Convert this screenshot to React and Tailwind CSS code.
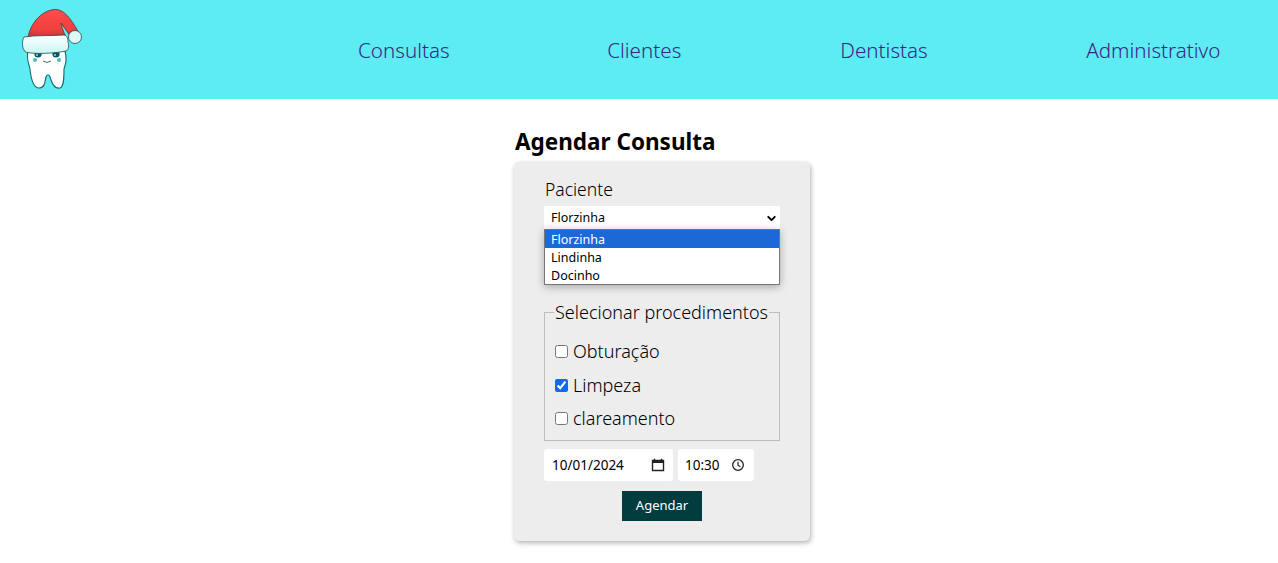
import React from 'react';
import { ChevronDown } from 'lucide-react';

const navLinks = [
  { label: 'Consultas', cls: 'ml-[275px]' },
  { label: 'Clientes', cls: 'ml-[157.5px]' },
  { label: 'Dentistas', cls: 'ml-[159px]' },
  { label: 'Administrativo', cls: 'ml-[158.5px]' },
];

const pacientes = ['Florzinha', 'Lindinha', 'Docinho'];

const procedimentos = [
  { label: 'Obturação', checked: false },
  { label: 'Limpeza', checked: true },
  { label: 'clareamento', checked: false },
];

// Tooth with a santa hat, drawn by hand
const Logo = () => (
  <svg width="62" height="82" viewBox="0 0 62 82" className="mt-[1px] shrink-0">
    <defs>
      <linearGradient id="hat" x1="0" y1="0" x2="0" y2="1">
        <stop offset="0" stopColor="#ff4d4d" />
        <stop offset="0.7" stopColor="#f03f3f" />
        <stop offset="1" stopColor="#a83a3a" />
      </linearGradient>
      <linearGradient id="fur" x1="0" y1="0" x2="0" y2="1">
        <stop offset="0" stopColor="#ffffff" />
        <stop offset="1" stopColor="#c8f7f5" />
      </linearGradient>
    </defs>
    <path
      d="M7 42 C5 50 8 55 9 60 C10 70 12 79 18 79 C24 79 24 72 25 68 C26 65 28 65 29 68 C31 74 33 80 39 79 C43 78 43 68 43 60 C45 54 46 50 44 42 Z"
      fill="#fff"
      stroke="#17676c"
      strokeWidth="1.1"
    />
    <circle cx="17" cy="45" r="3.6" fill="#0b5560" />
    <circle cx="35" cy="45" r="3.6" fill="#0b5560" />
    <circle cx="16" cy="46" r="1" fill="#7fe6e6" />
    <circle cx="34" cy="46" r="1" fill="#7fe6e6" />
    <circle cx="14" cy="51" r="2" fill="#35c4cc" />
    <circle cx="38" cy="51" r="2" fill="#35c4cc" />
    <path d="M22 52 Q26 55 30 52" fill="none" stroke="#17474a" strokeWidth="0.8" />
    <path
      d="M7 29 C9 15 20 2 33 0.5 C43 -0.5 50 10 58 24 L50 28 L47 24 L40 14 C41 20 44 26 46 30 Z"
      fill="url(#hat)"
      stroke="#5a3030"
      strokeWidth="0.8"
    />
    <path
      d="M3 28 C1 31 1 38 3 41 C4 44 6 43 10 44 C20 45 36 44 45 42 C48 41 48 36 47 33 C47 30 46 26 43 26 C30 27 15 26 3 28 Z"
      fill="url(#fur)"
      stroke="#234b4d"
      strokeWidth="0.8"
    />
    <circle cx="54" cy="28" r="6.5" fill="#dcfbf9" stroke="#234b4d" strokeWidth="0.8" />
  </svg>
);

const CalendarIcon = () => (
  <svg width="14" height="14" viewBox="0 0 14 14" className="shrink-0">
    <path d="M1.5 2.5h11v10h-11z" fill="none" stroke="#222" strokeWidth="1.4" />
    <path d="M1.5 2h11v3h-11z" fill="#222" />
    <path d="M3.5 .8v2M10.5 .8v2" stroke="#222" strokeWidth="1.4" />
  </svg>
);

const ClockIcon = () => (
  <svg width="14" height="14" viewBox="0 0 14 14" className="shrink-0">
    <circle cx="7" cy="7" r="5.3" fill="none" stroke="#222" strokeWidth="1.3" />
    <path d="M7 3.8V7.2l2.4 1.5" fill="none" stroke="#222" strokeWidth="1.2" />
  </svg>
);

export default function App() {
  return (
    <div className="min-h-[563px] bg-white font-['Noto_Sans','Open_Sans',sans-serif] font-light text-black">
      {/* Header */}
      <header className="flex h-[99px] items-center bg-[#5cecf2] pl-[21px]">
        <Logo />
        <nav className="flex items-center pt-[2px]">
          {navLinks.map((link) => (
            <a key={link.label} className={`${link.cls} text-[20.6px] text-[#3d1f85]`}>
              {link.label}
            </a>
          ))}
        </nav>
      </header>

      {/* Form */}
      <main className="ml-[514px] w-[296px]">
        <h1 className="mt-[27px] ml-[1px] text-[22.5px] leading-[32px] font-bold">Agendar Consulta</h1>
        <form className="mt-1 h-[379px] rounded-[5px] bg-[#ededed] px-[30px] pt-[14px] shadow-[1px_2px_5px_rgba(0,0,0,0.3)]">
          <label className="ml-[1px] block text-[17.5px] leading-[26px]">Paciente</label>

          <div className="relative mt-[4px] font-normal">
            <div className="flex h-[23px] items-center justify-between bg-white pt-[2px] pr-[2px] pl-[7px] text-[12.5px]">
              <span>Florzinha</span>
              <ChevronDown size={13} strokeWidth={3.5} />
            </div>
            <ul className="absolute top-[23px] left-0 w-full border border-[#767676] bg-white text-[12.5px] shadow-[0_2px_8px_rgba(0,0,0,0.3)]">
              {pacientes.map((p, i) => (
                <li
                  key={p}
                  className={i === 0 ? 'h-[18px] bg-[#1a69d6] pl-[6px] leading-[19px] text-white' : 'h-[18px] pl-[6px] leading-[19px]'}
                >
                  {p}
                </li>
              ))}
            </ul>
          </div>

          <fieldset className="mt-[71px] h-[141px] w-[236px] min-w-0 border border-[#bdbdbd] px-[10px]">
            <legend className="-ml-[1px] px-[1px] text-[18px] leading-[25px] whitespace-nowrap">
              Selecionar procedimentos
            </legend>
            <div className="mt-[13.5px] flex flex-col gap-[7.5px]">
              {procedimentos.map((p) => (
                <label key={p.label} className="flex h-[26px] items-center gap-[5px] text-[18px]">
                  <input type="checkbox" defaultChecked={p.checked} className="h-[13px] w-[13px] accent-[#0b6cf0]" />
                  {p.label}
                </label>
              ))}
            </div>
          </fieldset>

          <div className="mt-[8px] flex gap-[5px] text-[13.5px] font-normal">
            <div className="flex h-[32px] w-[129px] items-center justify-between rounded-[3px] bg-white pr-[8px] pl-[8px]">
              <span>10/01/2024</span>
              <CalendarIcon />
            </div>
            <div className="flex h-[32px] w-[76px] items-center justify-between rounded-[3px] bg-white pr-[9px] pl-[7px]">
              <span>10:30</span>
              <ClockIcon />
            </div>
          </div>

          <div className="mt-[10px] flex justify-center">
            <button type="button" className="h-[30px] w-[80px] bg-[#013c3e] text-[13px] font-normal text-white">
              Agendar
            </button>
          </div>
        </form>
      </main>
    </div>
  );
}
